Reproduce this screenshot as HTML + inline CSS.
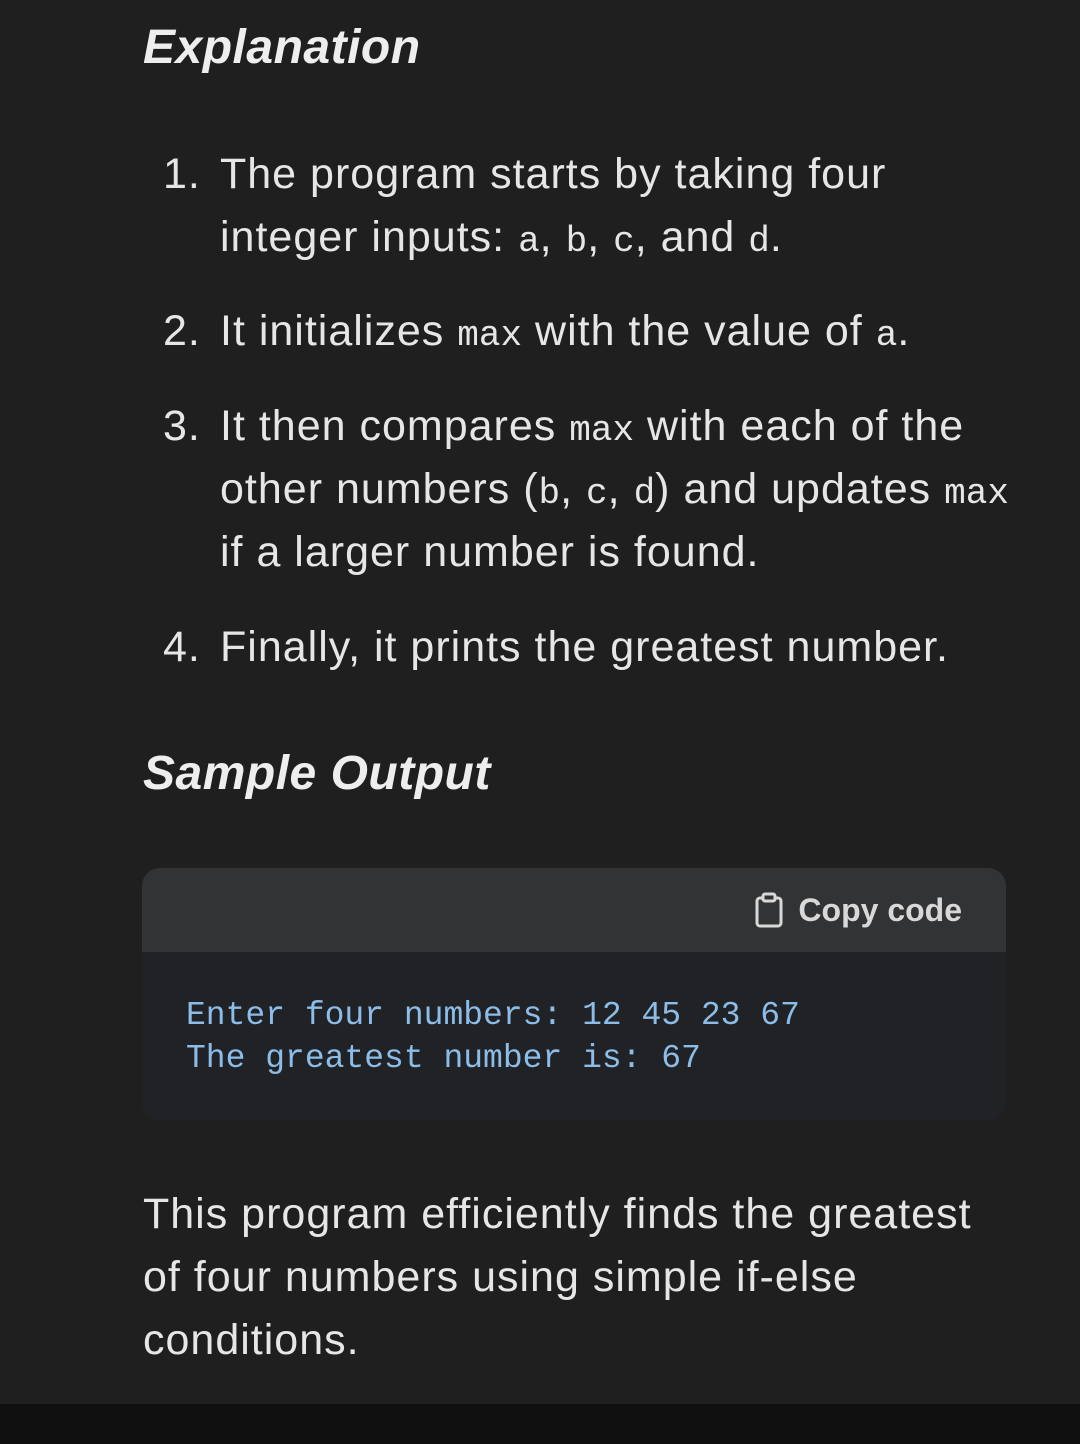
<!DOCTYPE html>
<html><head><meta charset="utf-8"><style>
body{margin:0;width:1080px;height:1444px;background:#1f1f1f;overflow:hidden;position:relative;font-family:"Liberation Sans",sans-serif;color:#e6e6e6}
.l{position:absolute;white-space:nowrap;font-size:43px;letter-spacing:1px;line-height:63px;height:63px}
.n{position:absolute;left:163px}
.m{font-family:"Liberation Mono",monospace;font-size:36px;letter-spacing:0}
h2{position:absolute;margin:0;left:143px;font-size:48px;font-style:italic;font-weight:bold;line-height:60px;color:#eeeeee;letter-spacing:0.5px}
.code{position:absolute;left:142px;top:868px;width:864px;height:252px;border-radius:18px;overflow:hidden;background:#202226}
.hd{height:84px;background:#323335;position:relative}
.cp{position:absolute;right:44px;top:22px;font-size:32px;font-weight:bold;color:#d8d8d8;line-height:40px}
pre{margin:0;position:absolute;left:44px;top:126px;font-family:"Liberation Mono",monospace;font-size:33px;line-height:43px;color:#8cbde8}
.bar{position:absolute;left:0;top:1404px;width:1080px;height:40px;background:#0f0f0f}
</style></head><body>
<h2 style="top:18px">Explanation</h2>
<div class="l n" style="top:143px">1.</div>
<div class="l" style="left:220px;top:143px">The program starts by taking four</div>
<div class="l" style="left:220px;top:206px">integer inputs: <span class="m">a</span>, <span class="m">b</span>, <span class="m">c</span>, and <span class="m">d</span>.</div>
<div class="l n" style="top:300px">2.</div>
<div class="l" style="left:220px;top:300px">It initializes <span class="m">max</span> with the value of <span class="m">a</span>.</div>
<div class="l n" style="top:395px">3.</div>
<div class="l" style="left:220px;top:395px">It then compares <span class="m">max</span> with each of the</div>
<div class="l" style="left:220px;top:458px">other numbers (<span class="m">b</span>, <span class="m">c</span>, <span class="m">d</span>) and updates <span class="m">max</span></div>
<div class="l" style="left:220px;top:521px">if a larger number is found.</div>
<div class="l n" style="top:616px">4.</div>
<div class="l" style="left:220px;top:616px">Finally, it prints the greatest number.</div>
<h2 style="top:744px">Sample Output</h2>
<div class="code">
<div class="hd"><div class="cp"><svg width="30" height="36" viewBox="0 0 30 36" style="vertical-align:-7px;margin-right:14px"><rect x="3" y="6" width="24" height="28" rx="3" fill="none" stroke="#d8d8d8" stroke-width="3"/><rect x="9" y="2" width="12" height="7" rx="2" fill="#323335" stroke="#d8d8d8" stroke-width="3"/></svg>Copy code</div></div>
<pre>Enter four numbers: 12 45 23 67
The greatest number is: 67</pre>
</div>
<div class="l" style="left:143px;top:1183px">This program efficiently finds the greatest</div>
<div class="l" style="left:143px;top:1246px">of four numbers using simple if-else</div>
<div class="l" style="left:143px;top:1309px">conditions.</div>
<div class="bar"></div>
</body></html>
